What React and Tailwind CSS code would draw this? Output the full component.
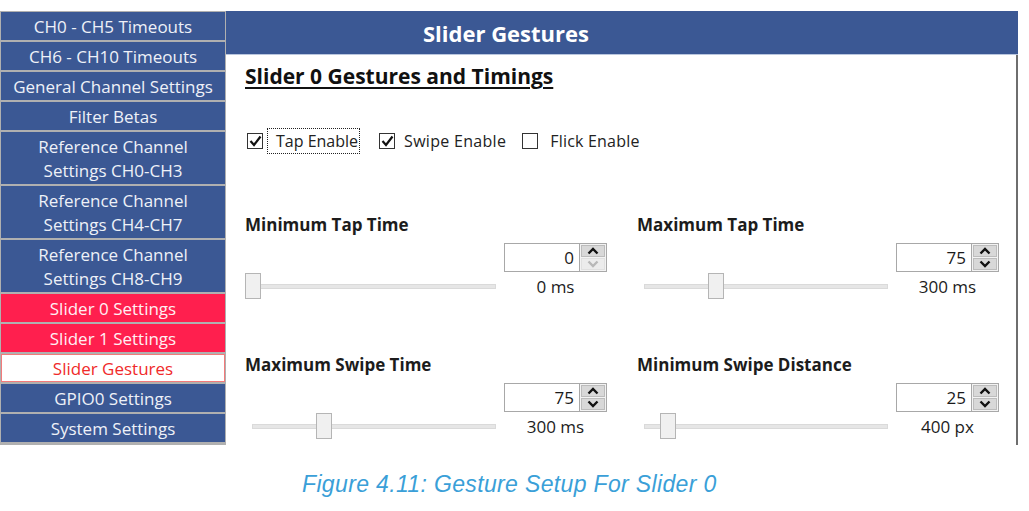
import React from "react";

const navItems = [
  { label: ["CH0 - CH5 Timeouts"], kind: "blue" },
  { label: ["CH6 - CH10 Timeouts"], kind: "blue" },
  { label: ["General Channel Settings"], kind: "blue" },
  { label: ["Filter Betas"], kind: "blue" },
  { label: ["Reference Channel", "Settings CH0-CH3"], kind: "blue" },
  { label: ["Reference Channel", "Settings CH4-CH7"], kind: "blue" },
  { label: ["Reference Channel", "Settings CH8-CH9"], kind: "blue" },
  { label: ["Slider 0 Settings"], kind: "red" },
  { label: ["Slider 1 Settings"], kind: "red" },
  { label: ["Slider Gestures"], kind: "active" },
  { label: ["GPIO0 Settings"], kind: "blue" },
  { label: ["System Settings"], kind: "blue" },
];

function NavButton({ item }) {
  const tall = item.label.length > 1;
  const base =
    "flex flex-col items-center justify-center text-[17px] leading-[24px] pt-[1px] " +
    (tall ? "h-[52px]" : "h-[28px]");
  const color =
    item.kind === "blue"
      ? "bg-[#3b5894] text-[#eef1f8]"
      : item.kind === "red"
      ? "bg-[#ff1f4e] text-[#fff0f3]"
      : "bg-white text-[#f02a2a] border border-[#f37a7a]";
  return (
    <div className={base + " " + color}>
      {item.label.map((l) => (
        <span key={l} className="whitespace-nowrap">
          {l}
        </span>
      ))}
    </div>
  );
}

function Check({ checked }) {
  return (
    <div className="w-[16px] h-[16px] border border-[#333333] bg-white flex items-center justify-center shrink-0">
      {checked && (
        <svg width="13" height="12" viewBox="0 0 13 12">
          <polyline
            points="1.5,6 5,10 11.5,1.5"
            fill="none"
            stroke="#111"
            strokeWidth="2.2"
          />
        </svg>
      )}
    </div>
  );
}

function Chevron({ up, disabled }) {
  return (
    <svg width="12" height="8" viewBox="0 0 12 8">
      <polyline
        points={up ? "1.5,6.5 6,2 10.5,6.5" : "1.5,1.5 6,6 10.5,1.5"}
        fill="none"
        stroke={disabled ? "#b8b8b8" : "#111"}
        strokeWidth="2.4"
      />
    </svg>
  );
}

function Spin({ value, downDisabled }) {
  return (
    <div className="flex h-[29px] w-[103px]">
      <div className="flex-1 border border-[#a8a8a8] bg-white text-right pr-[5px] text-[17px] leading-[27px] text-[#1a1a1a]">
        {value}
      </div>
      <div className="w-[27px] flex flex-col border border-l-0 border-[#a8a8a8] bg-[#f3f3f3] p-[1px] gap-[1px]">
        <div className="flex-1 bg-[#d8d8d8] border border-[#bcbcbc] flex items-center justify-center">
          <Chevron up />
        </div>
        <div
          className={
            "flex-1 flex items-center justify-center border " +
            (downDisabled ? "bg-[#ececec] border-[#e0e0e0]" : "bg-[#d8d8d8] border-[#bcbcbc]")
          }
        >
          <Chevron disabled={downDisabled} />
        </div>
      </div>
    </div>
  );
}

function Slider({ thumbClass, trackClass }) {
  return (
    <div className="relative h-[26px] w-[251px]">
      <div className={"absolute top-[11px] right-0 h-[5px] bg-[#e6e6e6] border border-[#dadada] " + trackClass} />
      <div className={"absolute top-0 w-[16px] h-[26px] bg-[#f0f0f0] border border-[#b5b5b5] " + thumbClass} />
    </div>
  );
}

function Cell({ title, value, unit, thumbClass, trackClass, downDisabled }) {
  return (
    <div className="w-[392px] shrink-0">
      <div className="h-[20px] leading-[20px] text-[17px] font-bold text-[#1c1c1c] whitespace-nowrap">
        {title}
      </div>
      <div className="flex gap-[8px]">
        <div className="w-[251px] pt-[38px]">
          <Slider thumbClass={thumbClass} trackClass={trackClass} />
        </div>
        <div className="w-[103px] pt-[8px] flex flex-col items-center">
          <Spin value={value} downDisabled={downDisabled} />
          <div className="mt-[5px] leading-[20px] text-[17px] text-[#1c1c1c] whitespace-nowrap">{unit}</div>
        </div>
      </div>
    </div>
  );
}

export default function App() {
  return (
    <div className="w-[1029px] h-[511px] bg-white overflow-hidden font-['Open_Sans',sans-serif]">
      <div className="flex pt-[11px] h-[445px]">
        <div className="w-[226px] bg-[#b0b0b0] pl-[1px] pr-[1px] pt-[1px] flex flex-col gap-[2px]">
          {navItems.map((it, i) => (
            <NavButton key={i} item={it} />
          ))}
        </div>
        <div className="w-[792px] flex flex-col">
          <div className="h-[44px] bg-[#3b5894] border-b border-[#b9c6de] flex items-center pl-[197px]">
            <span className="text-white font-bold text-[22px] leading-[28px]">Slider Gestures</span>
          </div>
          <div className="flex-1 bg-white border-r-2 border-[#6e6e6e] pl-[19px] overflow-hidden">
            <div className="mt-[7px] text-[21px] leading-[28px] font-bold underline text-[#111] decoration-[1.5px] underline-offset-[3px]">
              Slider 0 Gestures and Timings
            </div>
            <div className="mt-[38px] h-[26px] flex items-center text-[16px] text-[#222]">
              <div className="ml-[2px]">
                <Check checked />
              </div>
              <div className="ml-[4px] h-[26px] border border-dotted border-[#222] pl-[8px] pr-[1px] leading-[24px]">
                Tap Enable
              </div>
              <div className="ml-[19px]">
                <Check checked />
              </div>
              <div className="ml-[9px] leading-[24px] tracking-[0.3px]">Swipe Enable</div>
              <div className="ml-[16px]">
                <Check />
              </div>
              <div className="ml-[12px] leading-[24px] tracking-[0.2px]">Flick Enable</div>
            </div>
            <div className="mt-[61px] flex flex-col gap-y-[56px]">
              <div className="flex">
                <Cell
                  title="Minimum Tap Time"
                  value="0"
                  unit="0 ms"
                  thumbClass="left-0"
                  trackClass="left-[7px]"
                  downDisabled
                />
                <Cell
                  title="Maximum Tap Time"
                  value="75"
                  unit="300 ms"
                  thumbClass="left-[71px]"
                  trackClass="left-[7px] w-[244px]"
                />
              </div>
              <div className="flex">
                <Cell
                  title="Maximum Swipe Time"
                  value="75"
                  unit="300 ms"
                  thumbClass="left-[71px]"
                  trackClass="left-[7px]"
                />
                <Cell
                  title="Minimum Swipe Distance"
                  value="25"
                  unit="400 px"
                  thumbClass="left-[23px]"
                  trackClass="left-[7px] w-[244px]"
                />
              </div>
            </div>
          </div>
        </div>
      </div>
      <div className="mt-[24px] pl-[302px] font-['Liberation_Sans',Arial,sans-serif] italic text-[23px] leading-[30px] text-[#3a9fd8] tracking-[0.35px]">
        Figure 4.11: Gesture Setup For Slider 0
      </div>
    </div>
  );
}
